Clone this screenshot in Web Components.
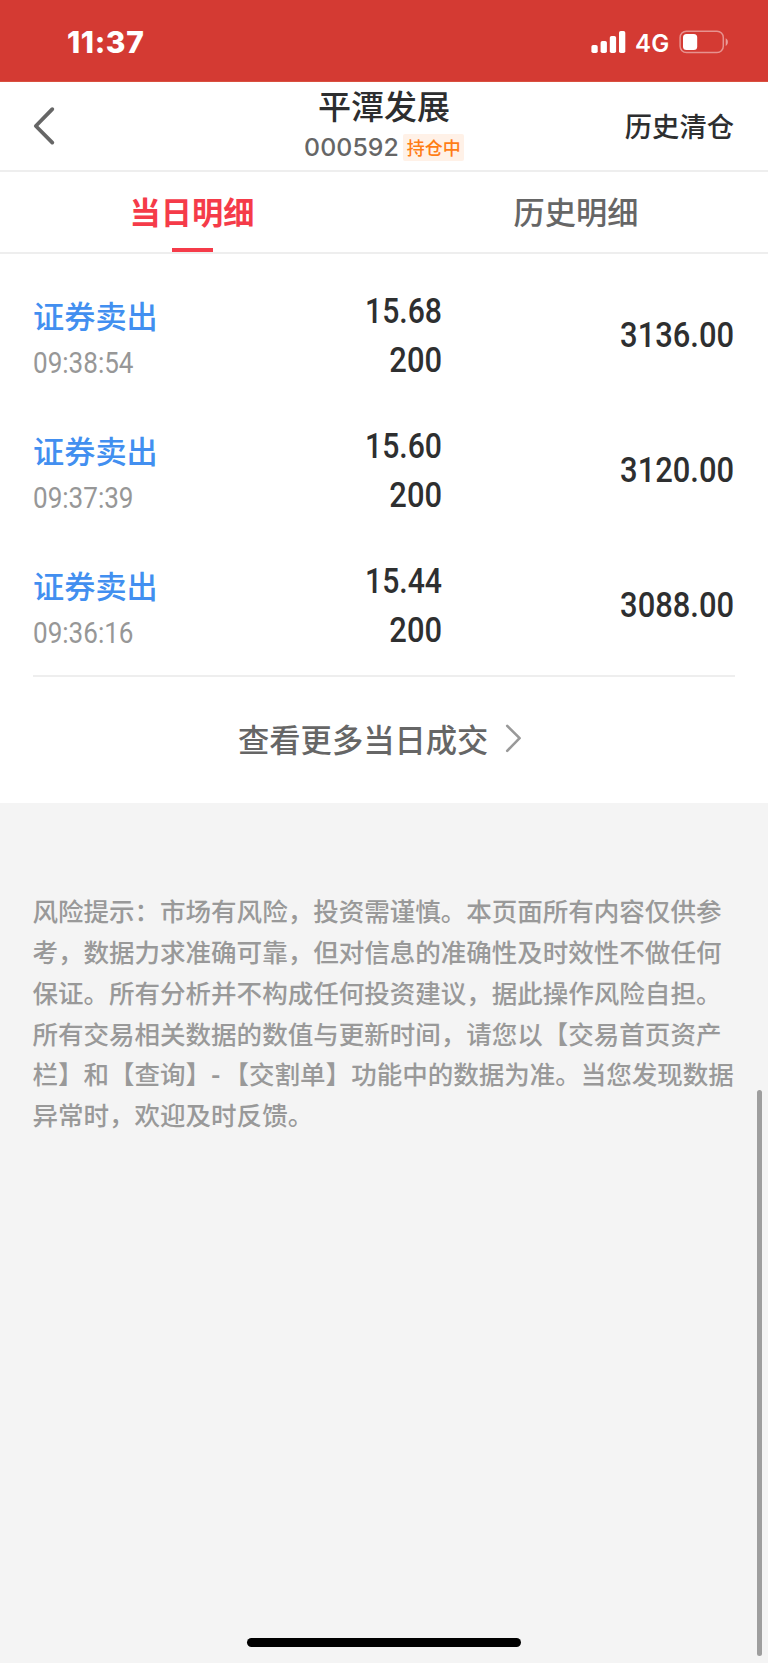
<!DOCTYPE html>
<html lang="zh-CN">
<head>
<meta charset="utf-8">
<title>平潭发展</title>
<style>
html,body{margin:0;padding:0}
body{width:768px;height:1663px;overflow:hidden;background:#f4f4f4;font-family:"Noto Sans CJK SC",sans-serif;font-weight:500;text-spacing-trim:space-all}
</style>
</head>
<body>
<trade-page></trade-page>
<script>
const define = (name, html) => customElements.define(name, class extends HTMLElement {
  constructor() {
    super();
    const t = document.createElement('template');
    t.innerHTML = html;
    this.attachShadow({mode: 'open'}).appendChild(t.content.cloneNode(true));
  }
});

define('status-bar', `
<style>
:host{display:flex;box-sizing:border-box;height:82px;padding:0 38px 0 67px;background:linear-gradient(#d43a33 81px,#d9503f 81px);color:#fff;font-family:Inter,sans-serif;justify-content:space-between}
.time{font-weight:800;font-size:30px;line-height:85px;letter-spacing:.6px}
.right{display:flex}
.net{font-weight:600;font-size:24px;line-height:87px;width:43px;letter-spacing:.2px}
svg{display:block}
</style>
<span class="time">11:37</span>
<div class="right">
<svg width="44" height="82" fill="#fff"><rect x=".4" y="45" width="6.3" height="8" rx="1.8"/><rect x="9.6" y="41" width="6.3" height="12" rx="1.8"/><rect x="18.8" y="36" width="6.3" height="17" rx="1.8"/><rect x="28" y="31" width="6.3" height="22" rx="1.8"/></svg>
<span class="net">4G</span>
<svg width="52" height="82"><rect x="2.1" y="31.2" width="43.2" height="21.4" rx="6.3" fill="none" stroke="#fff" stroke-opacity=".45" stroke-width="1.5"/><rect x="5" y="34" width="14.2" height="16" rx="3.5" fill="#fff"/><path d="M47.7 38.3c2.9 1.3 2.9 6.2 0 7.6z" fill="#fff" fill-opacity=".5"/></svg>
</div>`);

define('nav-bar', `
<style>
:host{display:grid;box-sizing:border-box;height:90px;grid-template-columns:1fr auto 1fr;background:#fff;border-bottom:2px solid #eee}
.back{padding:24px 0 0 32px}
svg{display:block}
.mid{display:flex;flex-direction:column;align-items:center}
.title{font-size:33px;line-height:40px;height:40px;margin-top:3px;color:#2d2e2f}
.sub{display:flex;gap:4.5px;height:28px;margin-top:8.5px}
.code{font:500 24.8px/27px Inter,sans-serif;color:#666;letter-spacing:.1px}
.tag{box-sizing:border-box;width:60.5px;height:27.5px;background:#fff1e7;color:#ff7d16;font-size:18px;line-height:27px;text-align:center;border-radius:2px}
.act{font-size:27.3px;line-height:87px;text-align:right;padding-right:34px;color:#2d2e2f}
</style>
<div class="back"><svg width="26" height="40" fill="none" stroke="#666" stroke-width="3.8" stroke-linecap="round" stroke-linejoin="round"><path d="M20.3 3.2 3.8 20 20.3 36.6"/></svg></div>
<div class="mid"><div class="title"><slot name="title"></slot></div><div class="sub"><span class="code"><slot name="code"></slot></span><span class="tag"><slot name="tag"></slot></span></div></div>
<div class="act"><slot name="action"></slot></div>`);

define('tab-item', `
<style>
:host{display:flex;flex:1;flex-direction:column;align-items:center;color:#666;font-size:31.2px}
span{display:block;height:76px;line-height:77px}
i{display:none;width:41px;height:4px;background:#f53b49}
:host([active]){color:#f53b49;font-weight:700}
:host([active]) i{display:block}
</style><span><slot></slot></span><i></i>`);

define('tab-bar', `
<style>:host{display:flex;box-sizing:border-box;height:82px;background:#fff;border-bottom:2px solid #eee}</style><slot></slot>`);

define('trade-row', `
<style>
:host{display:grid;height:135px;grid-template-columns:200px 208px 1fr}
.type{font-size:31.2px;line-height:41px;height:40px;color:#428ff0}
.clock{height:30px;margin-top:13.5px;font:450 28.8px/30px Roboto,sans-serif;color:#979797;transform:scaleX(.905);transform-origin:0 0}
.num{font:500 35.5px/49px Roboto,sans-serif;color:#2e2f30;text-align:right;transform:scaleX(.87);transform-origin:100% 0}
.mid .price{transform:scaleX(.85)}
.left{padding-top:24px}.left .clock{width:120px}
.mid{padding-top:16.5px;margin-right:-1px}.end{padding-top:41px;margin-right:1px}
</style>
<div class="left"><div class="type"><slot name="type"></slot></div><div class="clock"><slot name="time"></slot></div></div>
<div class="mid"><div class="num price"><slot name="price"></slot></div><div class="num"><slot name="count"></slot></div></div>
<div class="end"><div class="num"><slot name="total"></slot></div></div>`);

define('trade-list', `
<style>:host{display:block;box-sizing:border-box;height:423px;margin:0 33px;padding-top:16px;border-bottom:2px solid #eee}</style><slot></slot>`);

define('more-link', `
<style>:host{display:flex;height:126px;padding-left:238px;color:#666;font-size:31.3px;line-height:123px}
svg{display:block;margin:45px 0 0 16px}</style>
<slot></slot><svg width="20" height="32" fill="none" stroke="#999" stroke-width="2.6" stroke-linecap="round" stroke-linejoin="round"><path d="M3.2 3.8 15.6 16.2 3.2 28.8"/></svg>`);

define('risk-note', `
<style>:host{display:block;padding:87px 0 0 32.5px;color:#999;font-size:25.52px;line-height:40.85px;white-space:nowrap}</style><slot></slot>`);

define('scroll-thumb', `<style>:host{position:absolute;left:756.6px;top:1089.5px;width:5.6px;height:566px;border-radius:3px;background:#9e9e9e}</style>`);
define('home-indicator', `<style>:host{position:absolute;left:246.7px;top:1637.5px;width:274.5px;height:9.5px;border-radius:5px;background:#000}</style>`);

const trades = [['09:38:54','15.68','3136.00'],['09:37:39','15.60','3120.00'],['09:36:16','15.44','3088.00']];
define('trade-page', `
<style>
:host{display:block;position:relative;height:1663px;background:#f4f4f4}
main{height:803px;background:#fff}
.h{letter-spacing:3px;font-weight:700}
</style>
<main>
<status-bar></status-bar>
<nav-bar><span slot="title">平潭发展</span><span slot="code">000592</span><span slot="tag">持仓中</span><span slot="action">历史清仓</span></nav-bar>
<tab-bar><tab-item active>当日明细</tab-item><tab-item>历史明细</tab-item></tab-bar>
<trade-list>${trades.map(([t,p,s]) => `<trade-row><span slot="type">证券卖出</span><span slot="time">${t}</span><span slot="price">${p}</span><span slot="count">200</span><span slot="total">${s}</span></trade-row>`).join('')}</trade-list>
<more-link>查看更多当日成交</more-link>
</main>
<risk-note>风险提示：市场有风险，投资需谨慎。本页面所有内容仅供参<br>考，数据力求准确可靠，但对信息的准确性及时效性不做任何<br>保证。所有分析并不构成任何投资建议，据此操作风险自担。<br>所有交易相关数据的数值与更新时间，请您以【交易首页资产<br>栏】和【查询】<span class="h">-</span>【交割单】功能中的数据为准。当您发现数据<br>异常时，欢迎及时反馈。</risk-note>
<scroll-thumb></scroll-thumb>
<home-indicator></home-indicator>`);
</script>
</body>
</html>
